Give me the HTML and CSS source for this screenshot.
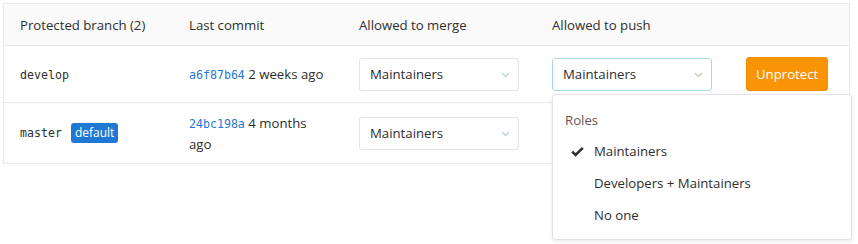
FILE: index.html
```html
<!DOCTYPE html>
<html>
  <head>
    <meta charset="utf-8"/>
    <title>Protected branches</title>
    <link rel="stylesheet" href="styles.css">
  </head>
  <body>
  <div class="branches_wrap">
  <table class="branches">
    <tr>
      <th class="col_branch">Protected branch (2)</th>
      <th class="col_commit">Last commit</th>
      <th class="col_merge">Allowed to merge</th>
      <th class="col_push">Allowed to push</th>
      <th class="col_action"></th>
    </tr>
    <tr class="row_develop">
      <td><span class="ref">develop</span></td>
      <td><span class="sha">a6f87b64</span> 2 weeks ago</td>
      <td>
        <div class="select">
          <span>Maintainers</span>
          <svg class="chevron" width="9" height="6" viewBox="0 0 9 6"><path d="M1 1 L4.5 4.5 L8 1" fill="none" stroke="#c3d6de" stroke-width="1.5"/></svg>
        </div>
      </td>
      <td>
        <div class="select open">
          <span>Maintainers</span>
          <svg class="chevron" width="9" height="6" viewBox="0 0 9 6"><path d="M1 1 L4.5 4.5 L8 1" fill="none" stroke="#d0cbb6" stroke-width="1.5"/></svg>
        </div>
      </td>
      <td><button class="btn_unprotect">Unprotect</button></td>
    </tr>
    <tr class="row_master">
      <td><span class="ref">master</span><span class="badge">default</span></td>
      <td class="commit_wrap"><span class="sha">24bc198a</span><span class="age"> 4 months ago</span></td>
      <td>
        <div class="select">
          <span>Maintainers</span>
          <svg class="chevron" width="9" height="6" viewBox="0 0 9 6"><path d="M1 1 L4.5 4.5 L8 1" fill="none" stroke="#c3d6de" stroke-width="1.5"/></svg>
        </div>
      </td>
      <td></td>
      <td></td>
    </tr>
  </table>

  <!-- open menu of the "Allowed to push" select -->
  <div class="dropdown">
    <div class="dropdown_title">Roles</div>
    <div class="dropdown_item">
      <svg class="check" width="13" height="11" viewBox="0 0 13 11"><path d="M1.2 5.6 L4.6 9 L11.8 1.8" fill="none" stroke="#2e2e38" stroke-width="2.6"/></svg>
      Maintainers
    </div>
    <div class="dropdown_item">Developers + Maintainers</div>
    <div class="dropdown_item">No one</div>
  </div>
  </div>
  </body>
</html>
```

FILE: styles.css
```css
html, body { height: 100%; }
body { margin: 3px; font-family: "Open Sans", "Noto Sans", sans-serif; font-size: 13.2px; color: #2e2e2e; background: #fff; }

.branches_wrap { position: relative; min-height: 238px; }

table.branches { border-collapse: collapse; width: 847px; table-layout: fixed; border: 1px solid #e8e8e8; }
table.branches th, table.branches td { text-align: left; padding: 0 16px; vertical-align: middle; }
table.branches th { height: 40px; background: #fafafa; font-weight: normal; border-bottom: 1px solid #e8e8e8; padding-top: 1px; }
table.branches tr.row_develop td { height: 56px; border-bottom: 1px solid #e8e8e8; }
table.branches tr.row_master td { height: 60px; }

th.col_branch { width: 137px; }
th.col_commit { width: 138px; }
th.col_merge { width: 161px; }
th.col_push { width: 161px; }

.ref { font-family: "DejaVu Sans Mono", monospace; font-size: 11.6px; color: #2e2e2e; }
.sha { font-family: "DejaVu Sans Mono", monospace; font-size: 11.6px; color: #1f78d1; }
td.commit_wrap { line-height: 20px; padding-right: 40px; }

.badge { display: inline-block; background: #1f78d1; color: #fff; font-size: 12px; line-height: 20px; padding: 0 4px; border-radius: 3px; margin-left: 9px; }

.select { display: flex; align-items: center; justify-content: space-between; box-sizing: border-box; width: 160px; height: 33px; border: 1px solid #e5e5e5; border-radius: 3px; padding: 0 8px 0 10px; background: #fff; }
.select.open { border-color: #a9d8e6; }
.chevron { margin-top: 1px; }

.dropdown { position: absolute; left: 549px; top: 91px; width: 300px; height: 146px; box-sizing: border-box; background: #fff; border: 1px solid #e3e3e3; border-radius: 3px; box-shadow: 0 2px 4px rgba(0,0,0,0.08); padding-top: 14px; }
.dropdown_title { color: #6f5252; line-height: 22px; padding-left: 12px; margin-bottom: 4px; }
.dropdown_item { position: relative; line-height: 32px; padding-left: 41px; color: #2e2e2e; }
.check { position: absolute; left: 18px; top: 11px; }

.btn_unprotect { font-family: inherit; font-size: 13.2px; color: #fff; background: #f89406; border: 1px solid #f28e00; border-radius: 3px; height: 34px; padding: 0 9px; margin-left: 1px; }
```
